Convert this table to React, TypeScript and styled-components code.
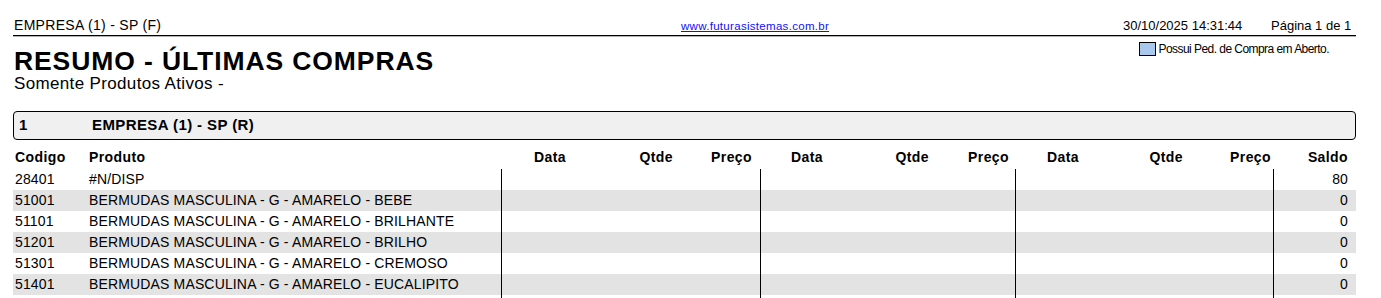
import React from "react";
import styled, { createGlobalStyle } from "styled-components";

const GlobalStyle = createGlobalStyle`
  html, body {
    margin: 0;
    padding: 0;
    background: #fff;
  }
  body {
    font-family: "Liberation Sans", Arial, sans-serif;
    color: #000;
  }
`;

// colunas da grade: codigo, produto, 3x (data, qtde, preco), saldo
const COLS = "74px 414px 110px 62px 87px 110px 59px 86px 110px 58px 90px 83px";

const Page = styled.div`
  width: 1343px;
  margin-left: 13px;
`;

const TopBar = styled.header`
  display: grid;
  grid-template-columns: 668px 442px 148px 1fr;
  align-items: baseline;
  padding-top: 16px;
  line-height: 18px;
  white-space: nowrap;
  border-bottom: 1px solid #000;
  box-shadow: 0 1px 0 rgba(0, 0, 0, 0.3);
`;

const Company = styled.span`
  font-size: 14px;
  letter-spacing: 0.3px;
  padding-left: 1px;
`;

const SiteLink = styled.a`
  font-size: 11.5px;
  letter-spacing: 0.3px;
  color: #1010ff;
  text-decoration: underline;
`;

const Stamp = styled.span<{ $right?: boolean }>`
  font-size: 13px;
  text-align: ${(p) => (p.$right ? "right" : "left")};
  padding-right: ${(p) => (p.$right ? "6px" : "0")};
`;

const TitleArea = styled.div`
  display: flex;
  justify-content: space-between;
  align-items: flex-start;
`;

const TitleCol = styled.div`
  display: flex;
  flex-direction: column;
  padding-left: 1px;
`;

const Title = styled.h1`
  margin: 11px 0 0;
  font-size: 26.5px;
  line-height: 28px;
  font-weight: 700;
  letter-spacing: 0.9px;
`;

const Subtitle = styled.div`
  font-size: 17px;
  line-height: 18px;
  letter-spacing: 0.35px;
`;

const Legend = styled.div`
  display: flex;
  align-items: center;
  gap: 3px;
  margin-top: 6px;
  padding-right: 27px;
  font-size: 12px;
  line-height: 14px;
  letter-spacing: -0.55px;
`;

const Swatch = styled.span`
  display: inline-block;
  box-sizing: border-box;
  width: 17px;
  height: 14px;
  background: #a8c8ee;
  border: 1px solid #000;
`;

const Band = styled.div`
  display: grid;
  grid-template-columns: 73px 1fr;
  box-sizing: border-box;
  height: 29px;
  margin-top: 18px;
  padding: 0 6px 2px 5px;
  line-height: 25px;
  background: #f0f0f0;
  border: 1px solid #000;
  border-radius: 4px;
  font-size: 15px;
  font-weight: 700;
  letter-spacing: 0.4px;
`;

const Row = styled.div<{ $shade?: boolean; $head?: boolean }>`
  display: grid;
  grid-template-columns: ${COLS};
  height: ${(p) => (p.$head ? "23px" : "21px")};
  line-height: ${(p) => (p.$head ? "23px" : "21px")};
  margin-top: ${(p) => (p.$head ? "6px" : "0")};
  background: ${(p) => (p.$shade ? "#e3e3e3" : "transparent")};
  font-size: 14px;
  font-weight: ${(p) => (p.$head ? 700 : 400)};
  letter-spacing: ${(p) => (p.$head ? "0.4px" : "0.15px")};
`;

const Cell = styled.div<{ $align?: "left" | "right"; $pl?: number; $pr?: number; $rule?: boolean }>`
  box-sizing: border-box;
  white-space: nowrap;
  overflow: hidden;
  text-align: ${(p) => p.$align || "left"};
  padding-left: ${(p) => p.$pl ?? 0}px;
  padding-right: ${(p) => p.$pr ?? 0}px;
  border-left: ${(p) => (p.$rule ? "1px solid #000" : "none")};
`;

const groups = [
  { dataPad: 33, precoPad: 8 },
  { dataPad: 31, precoPad: 6 },
  { dataPad: 32, precoPad: 2 },
];

const produtos = [
  { codigo: "28401", nome: "#N/DISP", saldo: "80" },
  { codigo: "51001", nome: "BERMUDAS MASCULINA - G - AMARELO - BEBE", saldo: "0" },
  { codigo: "51101", nome: "BERMUDAS MASCULINA - G - AMARELO - BRILHANTE", saldo: "0" },
  { codigo: "51201", nome: "BERMUDAS MASCULINA - G - AMARELO - BRILHO", saldo: "0" },
  { codigo: "51301", nome: "BERMUDAS MASCULINA - G - AMARELO - CREMOSO", saldo: "0" },
  { codigo: "51401", nome: "BERMUDAS MASCULINA - G - AMARELO - EUCALIPITO", saldo: "0" },
];

const HeaderRow = () => (
  <Row $head>
    <Cell $pl={2}>Codigo</Cell>
    <Cell $pl={2}>Produto</Cell>
    {groups.map((g, i) => (
      <React.Fragment key={i}>
        <Cell $pl={g.dataPad}>Data</Cell>
        <Cell $align="right">Qtde</Cell>
        <Cell $align="right" $pr={g.precoPad}>Preço</Cell>
      </React.Fragment>
    ))}
    <Cell $align="right" $pr={8}>Saldo</Cell>
  </Row>
);

const DataRow = ({ codigo, nome, saldo, shade }: { codigo: string; nome: string; saldo: string; shade: boolean }) => (
  <Row $shade={shade}>
    <Cell $pl={2}>{codigo}</Cell>
    <Cell $pl={2}>{nome}</Cell>
    {groups.map((g, i) => (
      <React.Fragment key={i}>
        <Cell $rule />
        <Cell />
        <Cell />
      </React.Fragment>
    ))}
    <Cell $rule $align="right" $pr={8}>{saldo}</Cell>
  </Row>
);

export default function App() {
  return (
    <>
      <GlobalStyle />
      <Page>
        <TopBar>
          <Company>EMPRESA (1) - SP (F)</Company>
          <span>
            <SiteLink href="#">www.futurasistemas.com.br</SiteLink>
          </span>
          <Stamp>30/10/2025 14:31:44</Stamp>
          <Stamp $right>Página 1 de 1</Stamp>
        </TopBar>

        <TitleArea>
          <TitleCol>
            <Title>RESUMO - ÚLTIMAS COMPRAS</Title>
            <Subtitle>Somente Produtos Ativos -</Subtitle>
          </TitleCol>
          <Legend>
            <Swatch />
            <span>Possui Ped. de Compra em Aberto.</span>
          </Legend>
        </TitleArea>

        <Band>
          <span>1</span>
          <span>EMPRESA (1) - SP (R)</span>
        </Band>

        <HeaderRow />
        {produtos.map((p, i) => (
          <DataRow key={p.codigo} {...p} shade={i % 2 === 1} />
        ))}
        <DataRow codigo="" nome="" saldo="" shade={false} />
      </Page>
    </>
  );
}
